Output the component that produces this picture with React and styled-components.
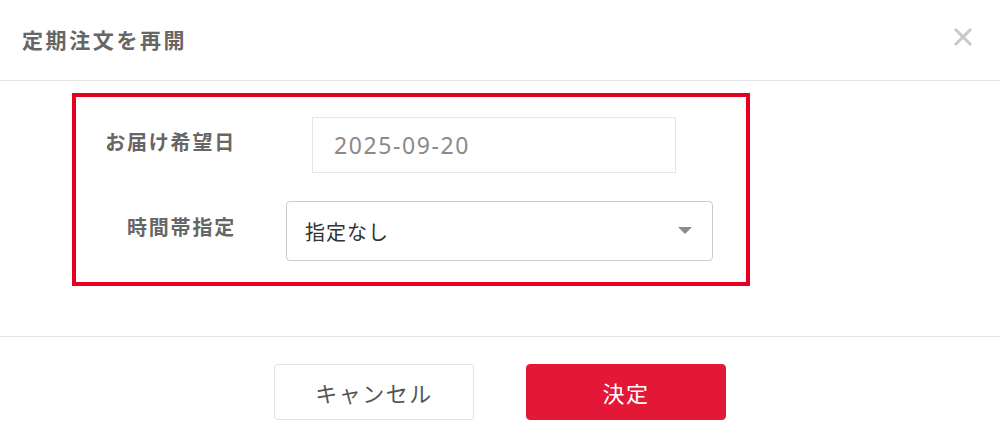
import styled, { createGlobalStyle } from 'styled-components';

const GlobalStyle = createGlobalStyle`
  html, body {
    margin: 0;
    padding: 0;
    background: #ffffff;
  }
  body {
    font-family: 'Noto Sans', 'Noto Sans CJK JP', sans-serif;
  }
`;

const Dialog = styled.div`
  width: 1000px;
  height: 440px;
  background: #ffffff;
  display: flex;
  flex-direction: column;
`;

const Header = styled.div`
  height: 80px;
  display: flex;
  align-items: center;
  justify-content: space-between;
  padding: 0 26px 0 22px;
  border-bottom: 1px solid #e3e3e3;
`;

const Title = styled.h2`
  margin: 0;
  font-size: 21px;
  font-weight: 700;
  letter-spacing: 2.6px;
  color: #666666;
  padding-bottom: 2px;
`;

const CloseButton = styled.button`
  width: 22px;
  height: 22px;
  padding: 0;
  border: none;
  background: none;
  display: flex;
  align-items: center;
  justify-content: center;
  cursor: pointer;
  margin-top: -6px;
`;

const Body = styled.div`
  height: 256px;
  border-bottom: 1px solid #e3e3e3;
  padding: 12px 0 0 72px;
  box-sizing: border-box;
`;

const Frame = styled.div`
  width: 678px;
  height: 193px;
  box-sizing: border-box;
  border: 4px solid #e60020;
  padding: 20px 0 0 0;
  display: flex;
  flex-direction: column;
  gap: 28px;
`;

const Row = styled.div`
  display: flex;
  align-items: center;
`;

const Label = styled.label`
  width: 160px;
  text-align: right;
  font-size: 20px;
  font-weight: 700;
  letter-spacing: 1.8px;
  color: #666666;
  padding-bottom: ${(p) => p.$lift || 0}px;
  flex-shrink: 0;
`;

const DateInput = styled.div`
  margin-left: 76px;
  width: 364px;
  height: 56px;
  box-sizing: border-box;
  border: 1px solid #e6e6e6;
  display: flex;
  align-items: center;
  padding-left: 21px;
  font-size: 23px;
  letter-spacing: 1.6px;
  color: #8a8a8a;
`;

const Select = styled.div`
  margin-left: 50px;
  width: 427px;
  height: 60px;
  box-sizing: border-box;
  border: 1px solid #cccccc;
  border-radius: 4px;
  display: flex;
  align-items: center;
  justify-content: space-between;
  padding: 0 20px 0 18px;
  font-size: 20px;
  letter-spacing: 1px;
  color: #333333;
`;

const Caret = styled.span`
  width: 0;
  height: 0;
  border-left: 7px solid transparent;
  border-right: 7px solid transparent;
  border-top: 7px solid #8c8c8c;
  margin-bottom: 2px;
`;

const Footer = styled.div`
  flex: 1;
  display: flex;
  justify-content: center;
  align-items: flex-start;
  padding-top: 27px;
  gap: 52px;
`;

const Button = styled.button`
  width: 200px;
  height: 56px;
  box-sizing: border-box;
  border-radius: 4px;
  font-family: inherit;
  font-size: 22px;
  letter-spacing: 1.5px;
  cursor: pointer;
  border: 1px solid ${(p) => (p.$primary ? '#e31837' : '#e3e3e3')};
  background: ${(p) => (p.$primary ? '#e31837' : '#ffffff')};
  color: ${(p) => (p.$primary ? '#ffffff' : '#555555')};
`;

function App() {
  return (
    <Dialog>
      <GlobalStyle />
      <Header>
        <Title>定期注文を再開</Title>
        <CloseButton aria-label="close">
          <svg width="20" height="20" viewBox="0 0 20 20">
            <path d="M2 2 L18 18 M18 2 L2 18" stroke="#c8c8c8" strokeWidth="3" strokeLinecap="butt" />
          </svg>
        </CloseButton>
      </Header>
      <Body>
        <Frame>
          <Row>
            <Label $lift={8}>お届け希望日</Label>
            <DateInput>2025-09-20</DateInput>
          </Row>
          <Row>
            <Label $lift={10}>時間帯指定</Label>
            <Select>
              指定なし
              <Caret />
            </Select>
          </Row>
        </Frame>
      </Body>
      <Footer>
        <Button>キャンセル</Button>
        <Button $primary>決定</Button>
      </Footer>
    </Dialog>
  );
}

export default App;
